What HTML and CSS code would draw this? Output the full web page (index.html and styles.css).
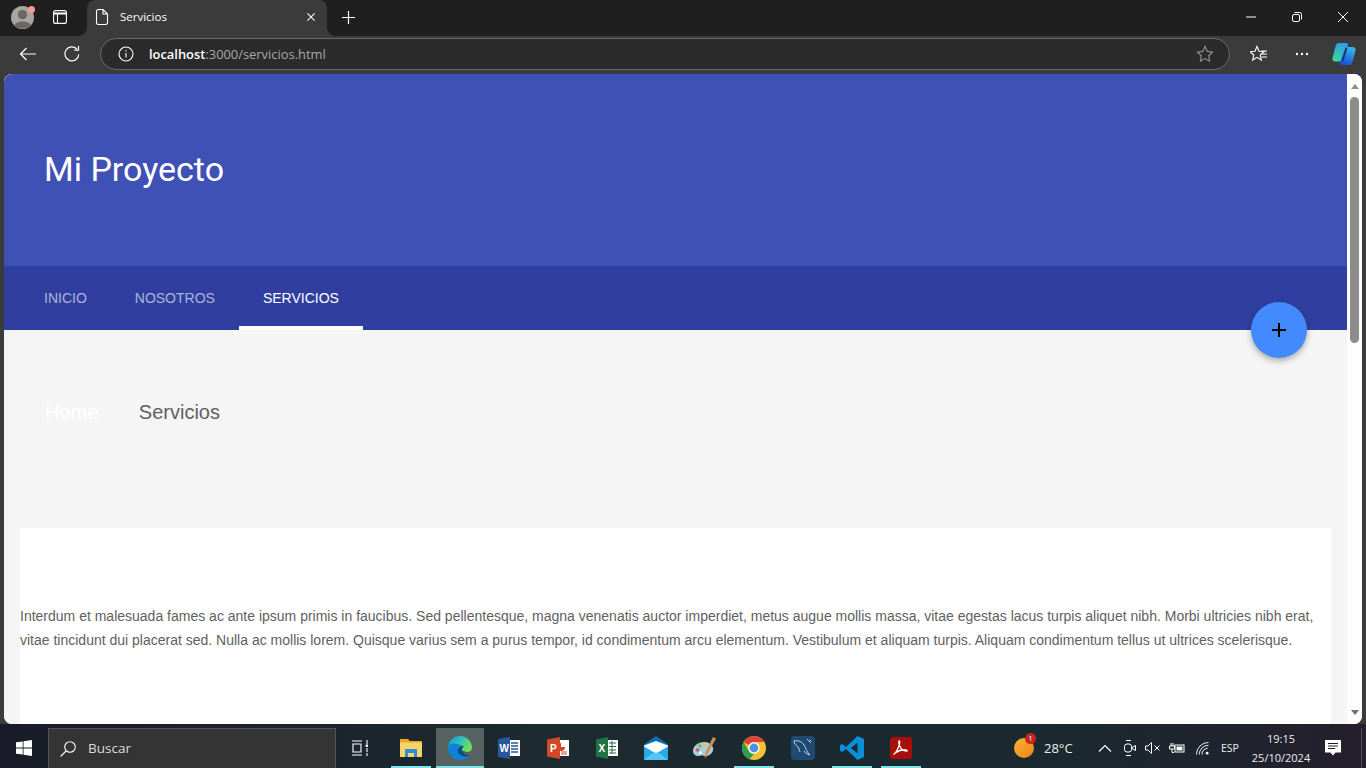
FILE: index.html
```html
<!DOCTYPE html>
<html lang="es">
<head>
<meta charset="utf-8">
<title>Servicios</title>
<link rel="stylesheet" href="styles.css">
</head>
<body>
<div class="tabstrip">
  <div class="avatar-wrap">
    <svg class="ic" width="23" height="23" viewBox="0 0 24 24"><circle cx="12" cy="12" r="12" fill="#a9a6a2"/><circle cx="12" cy="9" r="4.800" fill="#6a6867"/><path d="M3.500 20c2-5 15-5 17 0a12 12 0 0 1-17 0z" fill="#6a6867"/></svg>
    <span class="avatar-dot"></span>
  </div>
  <div class="strip-btn">
    <svg class="ic" width="14" height="14" viewBox="0 0 14 14" fill="none" stroke="#fff" stroke-width="1.100"><rect x=".6" y=".6" width="12.800" height="12.800" rx="2"/><path d="M.6 3.500h12.800" stroke-width="2"/><path d="M4.500 3.500v9.900"/></svg>
  </div>
  <div class="tab">
    <svg class="ic tab-fav" width="14" height="16" viewBox="0 0 14 16" fill="none" stroke="#fff" stroke-width="1.100"><path d="M1.500 2.500a2 2 0 0 1 2-2h4.500l4.500 4.500v8.500a2 2 0 0 1-2 2h-7a2 2 0 0 1-2-2zM8 .5v4.500h4.500"/></svg>
    <span class="tab-title">Servicios</span>
    <svg class="ic" width="8" height="8" viewBox="0 0 10 10" stroke="#fff" stroke-width="1.300"><path d="M.5.5l9 9M9.500.5l-9 9"/></svg>
  </div>
  <svg class="ic newtab" width="13" height="13" viewBox="0 0 13 13" stroke="#fff" stroke-width="1.200"><path d="M6.500 0v13M0 6.500h13"/></svg>
  <div class="winctl">
    <svg class="ic" width="10" height="2" viewBox="0 0 10 2" stroke="#fff"><path d="M0 1h10"/></svg>
    <svg class="ic" width="10" height="10" viewBox="0 0 10 10" fill="none" stroke="#fff"><rect x=".5" y="2.500" width="7" height="7" rx="1.500"/><path d="M2.500.5h5a2 2 0 0 1 2 2v5"/></svg>
    <svg class="ic" width="10" height="10" viewBox="0 0 10 10" stroke="#fff"><path d="M0 0l10 10M10 0L0 10"/></svg>
  </div>
</div>

<div class="toolbar">
  <svg class="ic tool-back" width="18" height="16" viewBox="0 0 18 16" fill="none" stroke="#fff" stroke-width="1.200"><path d="M17 8H1.500M7.500 2L1.500 8l6 6"/></svg>
  <svg class="ic tool-reload" width="18" height="18" viewBox="0 0 18 18" fill="none" stroke="#fff" stroke-width="1.200"><path d="M15.800 9.500A7 7 0 1 1 13.800 4M15.500 1v4.200h-4.200"/></svg>
  <div class="address">
    <svg class="ic" width="16" height="16" viewBox="0 0 16 16" fill="none" stroke="#fff" stroke-width="1.100"><circle cx="8" cy="8" r="7"/><path d="M8 7v4.500M8 4.200v1.400"/></svg>
    <span class="url"><span class="url-host">localhost</span>:3000/servicios.html</span>
    <svg class="ic" width="18" height="18" viewBox="0 0 18 18" fill="none" stroke="#8f8f8f" stroke-width="1.200"><path d="M9 1.500l2.300 4.900 5.200.7-3.800 3.700.9 5.400L9 13.600l-4.600 2.600.9-5.400L1.500 7.100l5.200-.7z"/></svg>
  </div>
  <svg class="ic tool-fav" width="18" height="18" viewBox="0 0 18 18" fill="none" stroke="#fff" stroke-width="1.100"><path d="M7 1.500l2 4.700 5 .5-3.800 3.300 1.100 5L7 12.300l-4.300 2.700 1.100-5L0 6.700l5-.5zM11 6h6M12 9h5M11.500 12H17"/></svg>
  <svg class="ic tool-more" width="14" height="4" viewBox="0 0 14 4" fill="#fff"><circle cx="2" cy="2" r="1.200"/><circle cx="7" cy="2" r="1.200"/><circle cx="12" cy="2" r="1.200"/></svg>
  <svg class="ic tool-copilot" width="24" height="22" viewBox="0 0 24 22">
    <defs>
      <linearGradient id="cpa" x1="0.5" y1="0" x2="0.3" y2="1"><stop offset="0" stop-color="#2a9fe8"/><stop offset="1" stop-color="#3fd69a"/></linearGradient>
      <linearGradient id="cpb" x1="0.7" y1="0" x2="0.3" y2="1"><stop offset="0" stop-color="#38b8f0"/><stop offset="1" stop-color="#1450d8"/></linearGradient>
    </defs>
    <path d="M7 0h7c1.500 0 2.500 1 2 2.500L11.500 17c-.4 1-1 1.500-2 1.500H3.500C1.200 18.500 0 17 .5 15L3.500 3.500C4 1 5.500 0 7 0z" fill="url(#cpa)"/>
    <path d="M15 4h5.500c2.300 0 3.500 1.500 3 3.500L20.500 18.500C20 21 18.500 22 17 22h-7c-1.500 0-2.500-1-2-2.500L12.500 5.500C13 4.500 14 4 15 4z" fill="url(#cpb)"/>
    <path d="M14.500 4.500L10.500 18" stroke="#17365f" stroke-width="1.800" fill="none"/>
  </svg>
</div>

<div class="viewport">
  <div class="page">
    <div class="content">
      <header class="hero"><h1 class="hero-title">Mi Proyecto</h1></header>
      <nav class="tabs">
        <a class="navtab">Inicio</a>
        <a class="navtab">Nosotros</a>
        <a class="navtab is-active">Servicios</a>
      </nav>
      <button class="fab" aria-label="Añadir">
        <svg class="ic" width="14" height="14" viewBox="0 0 14 14" stroke="#000" stroke-width="2"><path d="M7 0v14M0 7h14"/></svg>
      </button>
      <div class="crumbs">
        <span class="crumb-home">Home</span>
        <span class="crumb-current">Servicios</span>
      </div>
      <section class="card">
        <p class="card-text">Interdum et malesuada fames ac ante ipsum primis in faucibus. Sed pellentesque, magna venenatis auctor imperdiet, metus augue mollis massa, vitae egestas lacus turpis aliquet nibh. Morbi ultricies nibh erat, vitae tincidunt dui placerat sed. Nulla ac mollis lorem. Quisque varius sem a purus tempor, id condimentum arcu elementum. Vestibulum et aliquam turpis. Aliquam condimentum tellus ut ultrices scelerisque.</p>
      </section>
    </div>
    <div class="scrollbar">
      <span class="arrow-up"></span>
      <span class="thumb"></span>
      <span class="arrow-down"></span>
    </div>
  </div>
</div>

<footer class="taskbar">
  <div class="start">
    <svg class="ic" width="16" height="16" viewBox="0 0 16 16" fill="#fff"><path d="M0 2.300l6.700-.9v6.200H0zM7.500 1.300L16 0v7.600H7.500zM0 8.400h6.700v6.200L0 13.700zM7.500 8.400H16V16l-8.500-1.200z"/></svg>
  </div>
  <div class="search">
    <svg class="ic" width="16" height="16" viewBox="0 0 16 16" fill="none" stroke="#fff" stroke-width="1.100"><circle cx="10" cy="6" r="5.300"/><path d="M6 10L.6 15.500"/></svg>
    <span class="search-text">Buscar</span>
  </div>
  <div class="taskview">
    <svg class="ic" width="16" height="16" viewBox="0 0 16 16" fill="none" stroke="#fff" stroke-width="1.100"><path d="M0 1h10M0 15h10M1 4h8v8H1zM15 0v4M15 8v4M15 13v3"/><rect x="13.600" y="4.500" width="2.400" height="2.400" fill="#fff" stroke="none"/></svg>
  </div>
  <div class="apps">
    <div class="app is-open">
      <svg class="ic" width="22" height="18" viewBox="0 0 22 18"><path d="M0 0h8l2 2h12v3H0z" fill="#e8a91e"/><path d="M0 3.500h22V18H0z" fill="#f8d568"/><path d="M5 10h12v8h-3v-4H8v4H5z" fill="#2a8fd8"/></svg>
    </div>
    <div class="app is-active is-open">
      <svg class="ic" width="24" height="24" viewBox="0 0 24 24">
        <defs><linearGradient id="edg" x1="0.1" y1="0.2" x2="0.9" y2="0.6"><stop offset="0" stop-color="#1e9fd8"/><stop offset="0.5" stop-color="#2fc4b8"/><stop offset="1" stop-color="#6fdc60"/></linearGradient></defs>
        <path d="M12 0a12 12 0 0 1 12 12c0 3-3 4.500-6 3.800L9 13C6 11.500 2 11 0 13A12 12 0 0 1 12 0z" fill="url(#edg)"/>
        <path d="M0 12c0 7 5.500 12 12 12 4 0 7.500-1.500 9.500-4.500-4.500 2-10 .5-11.500-3.500-1-3 .5-5.500 3-7C8 7.500 0 6 0 12z" fill="#0f82d2"/>
        <path d="M10 16c1.500 4 7 5.500 11.500 3.500-3.500-.3-7-1.800-7.500-5-.3-2 .5-3.500 2-4.300-1-.7-2-.7-3-.2-2.500 1.500-4 3-3 6z" fill="#0b4a8c"/>
      </svg>
    </div>
    <div class="app">
      <svg class="ic" width="24" height="24" viewBox="0 0 24 24"><path d="M7 4h16v16H7z" fill="#fff"/><path d="M14 7h7M14 10h7M14 13h7M14 16h7" stroke="#2b579a" stroke-width="1.500"/><path d="M1 3L13 1v22L1 21z" fill="#2b579a"/><text class="app-letter" x="2.500" y="16">W</text></svg>
    </div>
    <div class="app">
      <svg class="ic" width="24" height="24" viewBox="0 0 24 24"><path d="M8 4h15v16H8z" fill="#fff"/><path d="M15 7a4 4 0 1 0 4 4h-4z" fill="#d04a2a"/><path d="M15 16h6M15 18h6" stroke="#d04a2a"/><path d="M1 3.500L14 1v22L1 20.500z" fill="#d04a2a"/><text class="app-letter" x="4" y="16">P</text></svg>
    </div>
    <div class="app">
      <svg class="ic" width="24" height="24" viewBox="0 0 24 24"><path d="M9 4h14v16H9z" fill="#fff"/><path d="M14 7h7M14 10.500h7M14 14h7M14 17h7M17 5v13" stroke="#217346"/><path d="M1 3.500L13 1v22L1 20.500z" fill="#217346"/><text class="app-letter" x="3.500" y="16">X</text></svg>
    </div>
    <div class="app">
      <svg class="ic" width="24" height="24" viewBox="0 0 24 24"><path d="M0 8.500L12 0l12 8.500V24H0z" fill="#0f6cbd"/><path d="M0 9.500L12 5l12 4.500v2L12 18 0 11.500z" fill="#fff"/><path d="M0 10.500L12 17.500l12-7V24H0z" fill="#28a8ea"/><path d="M0 24L10 16l2 1.500 2-1.500L24 24z" fill="#50c7f5"/></svg>
    </div>
    <div class="app">
      <svg class="ic" width="24" height="24" viewBox="0 0 24 24"><path d="M11 6C5 6 0 10 0 15c0 4 4 6 8 4.500 2-.8 3 1.500 6 .5 4-1 7-5 6-8.500C18.500 8 15.500 6 11 6z" fill="#a8cde0"/><circle cx="4.500" cy="14" r="1.800" fill="#d9534f"/><circle cx="7" cy="10" r="1.800" fill="#6fbf4a"/><circle cx="11.500" cy="9" r="1.800" fill="#f2c230"/><circle cx="7.500" cy="17" r="1.400" fill="#fff"/><path d="M20 1l3 1.500L15 17l-3 6 .3-6.500z" fill="#c9934a"/></svg>
    </div>
    <div class="app is-open">
      <svg class="ic" width="24" height="24" viewBox="0 0 24 24"><circle cx="12" cy="12" r="12" fill="#f2c230"/><path d="M12 0a12 12 0 0 1 10.400 6H12a6 6 0 0 0-5.200 3L1.600 6A12 12 0 0 1 12 0z" fill="#db4437"/><path d="M1.600 6l5.200 9a6 6 0 0 0 5.200 3l-4.500 5.200A12 12 0 0 1 1.600 6z" fill="#2f9e4f"/><circle cx="12" cy="12" r="5.700" fill="#fff"/><circle cx="12" cy="12" r="4.400" fill="#4a90e8"/></svg>
    </div>
    <div class="app">
      <svg class="ic" width="24" height="24" viewBox="0 0 24 24"><rect width="24" height="24" rx="4" fill="#1f4a73"/><path d="M3 5c5-1 8 1 10 4s2 6 6 10c-3-1-5-2-6-4M3 5c0 3 2 4 4 6 1 1 1 3 2 5M16 3l4 4M20 4l-2 2" fill="none" stroke="#c8d6e2" stroke-width="1"/></svg>
    </div>
    <div class="app is-open">
      <svg class="ic" width="24" height="24" viewBox="0 0 24 24"><path d="M17.500 0L24 3v18l-6.500 3L6 13l-3.800 3L0 14.800V9.200L2.200 8 6 11zM17.500 6.500L11 12l6.500 5.500z" fill="#0a8ed9"/></svg>
    </div>
    <div class="app is-open">
      <svg class="ic" width="22" height="22" viewBox="0 0 22 22"><rect width="22" height="22" rx="3" fill="#a80f0a"/><path d="M4 17c2-1 4-5 5.500-10 .3-2 .3-3-.3-3-.8 0-.6 3 1 6 1.500 3 3.500 4 6 4 1.500 0 1.500-1-.5-1.200-3-.2-7 .6-10 3-1.700 1.200-2 1.500-1.700 1.200z" fill="none" stroke="#fff" stroke-width="1.300"/></svg>
    </div>
  </div>
  <div class="tray">
    <div class="weather">
      <span class="sun"><span class="sun-badge">1</span></span>
      <span class="temp">28°C</span>
    </div>
    <svg class="ic tray-chev" width="14" height="8" viewBox="0 0 14 8" fill="none" stroke="#fff" stroke-width="1.200"><path d="M1 7.500l6-6 6 6"/></svg>
    <svg class="ic tray-cam" width="12" height="16" viewBox="0 0 12 16" fill="none" stroke="#fff"><path d="M2 .5h5M2 15.500h5"/><rect x=".5" y="4" width="7" height="8" rx="2.500"/><path d="M8 7.500l3.500-2v5l-3.500-2z"/></svg>
    <svg class="ic tray-vol" width="15" height="12" viewBox="0 0 15 12" fill="none" stroke="#fff"><path d="M.5 4h2.500L6.500 .5v11L3 8H.5zM9.500 3.500l5 5M14.500 3.500l-5 5"/></svg>
    <svg class="ic tray-bat" width="16" height="11" viewBox="0 0 16 11" fill="none" stroke="#fff"><path d="M2 0v3M4 0v3M.5 3h5v3h-5zM3 6v3.500h2"/><rect x="6" y="2" width="9" height="7"/><rect x="7.500" y="3.500" width="6" height="4" fill="#fff" stroke="none"/></svg>
    <svg class="ic tray-wifi" width="13" height="13" viewBox="0 0 14 14" fill="none" stroke="#fff" stroke-width="1"><path d="M.5 13.500A13 13 0 0 1 13.500.5M3.500 13.500A10 10 0 0 1 13.500 3.500M6.500 13.500a7 7 0 0 1 6-6.800"/><circle cx="12" cy="12" r="1.500" fill="#fff" stroke="none"/></svg>
    <span class="tray-lang">ESP</span>
    <div class="clock"><span>19:15</span><span>25/10/2024</span></div>
    <svg class="ic tray-note" width="16" height="16" viewBox="0 0 16 16"><path d="M0 0h16v12.500h-5.500L8 15.500l-2.500-3H0z" fill="#fff"/><path d="M3 3.500h10M3 6h10M3 8.500h7" stroke="#1a2228"/></svg>
    <span class="tray-end"></span>
  </div>
</footer>
</body>
</html>
```
FILE: styles.css
```css
* { box-sizing: border-box; }
html, body { margin: 0; height: 100%; }
body {
  width: 1366px;
  height: 768px;
  overflow: hidden;
  display: flex;
  flex-direction: column;
  background: #3b3b3b;
  font-family: "Liberation Sans", Arial, sans-serif;
}
.ic { display: block; flex: none; }

/* Browser chrome */
.tabstrip {
  height: 36px;
  flex: none;
  display: flex;
  align-items: center;
  padding-bottom: 2px;
  background: #1f1f1f;
}
.avatar-wrap { position: relative; margin-left: 11px; width: 23px; height: 23px; }
.avatar-dot {
  position: absolute; top: 0; right: -1px;
  width: 7px; height: 7px; border-radius: 50%;
  background: #f59a95;
}
.strip-btn { margin-left: 19px; width: 14px; }
.tab {
  position: relative;
  margin-left: 20px;
  margin-bottom: -2px;
  align-self: flex-end;
  width: 240px;
  height: 36px;
  background: #3b3b3b;
  border-radius: 8px 8px 0 0;
  display: flex;
  align-items: center;
  padding: 0 12px 2px 8px;
  color: #fff;
}
.tab::before, .tab::after {
  content: "";
  position: absolute;
  bottom: 0;
  width: 8px;
  height: 8px;
}
.tab::before {
  left: -8px;
  background: radial-gradient(circle at 0 0, #1f1f1f 7.500px, #3b3b3b 8px);
}
.tab::after {
  right: -8px;
  background: radial-gradient(circle at 100% 0, #1f1f1f 7.500px, #3b3b3b 8px);
}
.tab-title {
  flex: 1;
  margin-left: 11px;
  margin-bottom: 2px;
  font: 11.500px "Open Sans", "Noto Sans", sans-serif;
  color: #fff;
}
.newtab { margin-left: 15px; }
.winctl {
  margin-left: auto;
  display: flex;
  align-items: center;
  gap: 36px;
  padding-right: 18px;
}
.toolbar {
  height: 38px;
  flex: none;
  display: flex;
  align-items: center;
  padding-bottom: 2px;
  background: #3b3b3b;
}
.tool-back { margin-left: 19px; }
.tool-reload { margin-left: 26px; }
.address {
  margin-left: 19px;
  width: 1130px;
  height: 32px;
  border: 1px solid #6a6a6a;
  border-radius: 16px;
  background: #2b2b2b;
  display: flex;
  align-items: center;
  padding: 0 15px 0 17px;
}
.url {
  flex: 1;
  margin-left: 15px;
  font: 12.900px "Open Sans", "Noto Sans", sans-serif;
  color: #a8a8a8;
}
.url-host { color: #fff; font-weight: 600; }
.tool-fav { margin-left: 20px; }
.tool-more { margin-left: 27px; }
.tool-copilot { margin-left: 23px; }

/* Page viewport */
.viewport {
  height: 650px;
  flex: none;
  padding: 0 4px;
  display: flex;
}
.page {
  flex: 1;
  display: flex;
  border-radius: 8px;
  overflow: hidden;
  background: #f5f5f5;
}
.content {
  flex: 1;
  position: relative;
  overflow: hidden;
  background: #f5f5f5;
}
.hero {
  height: 192px;
  background: #3f51b5;
  display: flex;
  align-items: center;
  padding: 0 0 2px 40px;
}
.hero-title {
  margin: 0;
  font: 400 34px/1 Roboto, sans-serif;
  color: #fff;
}
.tabs {
  height: 64px;
  background: #303f9f;
  display: flex;
  padding-left: 16px;
}
.navtab {
  display: flex;
  align-items: center;
  padding: 0 24px;
  font-size: 14px;
  text-transform: uppercase;
  color: rgba(255, 255, 255, 0.6);
}
.navtab.is-active {
  color: #fff;
  border-bottom: 4px solid #fff;
  padding-top: 4px;
}
.fab {
  position: absolute;
  left: 1247px;
  top: 228px;
  width: 56px;
  height: 56px;
  padding: 0;
  border: 0;
  border-radius: 50%;
  background: #448aff;
  display: flex;
  align-items: center;
  justify-content: center;
  box-shadow: 0 3px 6px rgba(0, 0, 0, 0.3);
}
.crumbs {
  height: 198px;
  padding: 68px 0 0 41px;
  display: flex;
  gap: 40.500px;
  font-size: 20px;
  line-height: 28px;
}
.crumb-home { color: #fff; }
.crumb-current { color: #616161; }
.card {
  margin: 0 16px;
  height: 300px;
  padding-top: 76px;
  background: #fff;
}
.card-text {
  margin: 0;
  font-size: 14px;
  line-height: 24px;
  color: #616161;
}
.scrollbar {
  width: 15px;
  flex: none;
  background: #fdfdfd;
  display: flex;
  flex-direction: column;
  align-items: center;
}
.arrow-up {
  margin-top: 10px;
  border: 4.500px solid transparent;
  border-top: 0;
  border-bottom: 5px solid #8c8c8c;
}
.thumb {
  margin-top: 8px;
  width: 9px;
  height: 246px;
  border-radius: 5px;
  background: #8c8c8c;
}
.arrow-down {
  margin-top: auto;
  margin-bottom: 9px;
  border: 4.500px solid transparent;
  border-bottom: 0;
  border-top: 5px solid #6e6e6e;
}

/* Taskbar */
.taskbar {
  height: 44px;
  flex: none;
  display: flex;
  align-items: stretch;
  padding-top: 4px;
  background: linear-gradient(90deg, #191c28 0%, #1d2a30 40%, #1a2a30 75%, #241f2c 100%);
  color: #fff;
  font-family: "Open Sans", "Noto Sans", sans-serif;
}
.start { width: 48px; display: flex; align-items: center; justify-content: center; }
.search {
  width: 288px;
  background: #343434;
  border: 1px solid #545454;
  border-bottom: 0;
  display: flex;
  align-items: center;
  padding-left: 11px;
}
.search-text { margin-left: 12px; margin-bottom: 1px; font-size: 13.500px; color: #dcdcdc; }
.taskview { width: 48px; display: flex; align-items: center; justify-content: center; }
.apps { display: flex; gap: 1px; margin-left: 3px; }
.app {
  width: 48px;
  display: flex;
  align-items: center;
  justify-content: center;
  position: relative;
}
.app.is-active { background: #55625f; }
.app.is-open::after {
  content: "";
  position: absolute;
  left: 4px;
  right: 4px;
  bottom: 0;
  height: 2px;
  background: #7fe3e9;
}
.app.is-active.is-open::after { left: 0; right: 0; }
.app-letter { font: 700 10px "Liberation Sans", sans-serif; fill: #fff; }
.tray { flex: 1; display: flex; align-items: center; }
.weather { margin-left: 89px; display: flex; align-items: center; }
.sun {
  position: relative;
  width: 20px;
  height: 20px;
  border-radius: 50%;
  background: linear-gradient(135deg, #f7b733, #f0801a);
}
.sun-badge {
  position: absolute;
  top: -5px;
  right: -2px;
  width: 11px;
  height: 11px;
  border-radius: 50%;
  background: #c4261d;
  font-size: 7px;
  line-height: 11px;
  text-align: center;
  color: #fff;
}
.temp { margin-left: 10px; width: 29px; font-size: 13px; white-space: nowrap; color: #eee; }
.tray-chev { margin-left: 25px; }
.tray-cam { margin-left: 12px; }
.tray-vol { margin-left: 9px; }
.tray-bat { margin-left: 9px; }
.tray-wifi { margin-left: 11px; }
.tray-lang { margin-left: 12px; width: 18px; font-size: 10.500px; white-space: nowrap; color: #eee; }
.clock {
  margin-left: 12px;
  width: 60px;
  display: flex;
  flex-direction: column;
  align-items: center;
  font-size: 11px;
  line-height: 19px;
  white-space: nowrap;
  color: #eee;
}
.tray-note { margin-left: 14px; }
.tray-end { margin-left: 20px; width: 1px; height: 100%; background: #4a4a50; }
```
